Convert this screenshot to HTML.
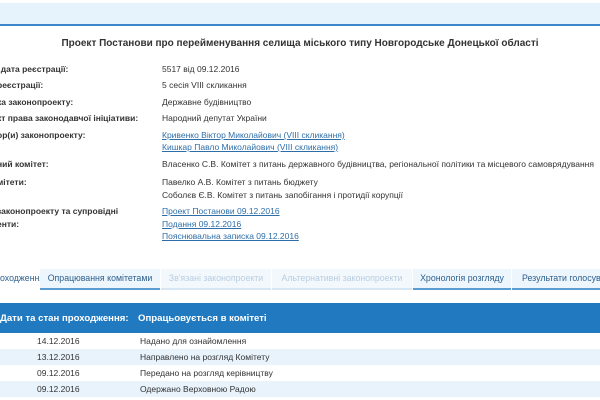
<!DOCTYPE html>
<html><head><meta charset="utf-8"><style>
body{margin:0;width:600px;height:400px;overflow:hidden;background:#fff;font-family:"Liberation Sans",Arial,sans-serif;font-size:8.5px;color:#333;position:relative}
.a{position:absolute;white-space:nowrap}
.top{position:absolute;left:0;top:3px;width:600px;height:21px;background:#e6f2fc;border-bottom:2px solid #3a86c8}
.l{font-weight:bold;color:#333}
a{color:#2e6ea8;text-decoration:underline}
.tab{position:absolute;top:269px;height:19px;line-height:19px;text-align:center;background:#eef6fd;border-bottom:2px solid #5a9bd2;color:#2d5f8e;white-space:nowrap;overflow:hidden;font-size:8.8px}
.tab.d{color:#b8cde0;background:#f3f8fd;border-bottom-color:#d6e6f4}
.hd{position:absolute;left:0;top:303px;width:600px;height:30px;background:#2179c0;color:#fff;font-weight:bold;font-size:9.6px}
.r{position:absolute;left:0;width:600px;height:16px;line-height:16px}
.r.s{background:#e8f3fc}
</style></head><body>
<div class="top"></div>
<div class="a" style="left:0;width:600px;top:38px;text-align:center;font-weight:bold;font-size:10px">Проект Постанови про перейменування селища міського типу Новгородське Донецької області</div>
<div class="a l" style="left:-4px;top:64px">, дата реєстрації:</div><div class="a" style="left:162px;top:64px">5517 від 09.12.2016</div>
<div class="a l" style="left:-3px;top:80px">реєстрації:</div><div class="a" style="left:162px;top:80px">5 сесія VIII скликання</div>
<div class="a l" style="left:-3px;top:97px">ка законопроекту:</div><div class="a" style="left:162px;top:97px">Державне будівництво</div>
<div class="a l" style="left:-3px;top:113px">кт права законодавчої ініціативи:</div><div class="a" style="left:162px;top:113px">Народний депутат України</div>
<div class="a l" style="left:-3px;top:130px">ор(и) законопроекту:</div><div class="a" style="left:162px;top:130px"><a>Кривенко Віктор Миколайович (VIII скликання)</a></div>
<div class="a" style="left:162px;top:142px"><a>Кишкар Павло Миколайович (VIII скликання)</a></div>
<div class="a l" style="left:-3px;top:159px">ний комітет:</div><div class="a" style="left:162px;top:159px">Власенко С.В. Комітет з питань державного будівництва, регіональної політики та місцевого самоврядування</div>
<div class="a l" style="left:-3px;top:177px">мітети:</div><div class="a" style="left:162px;top:177px">Павелко А.В. Комітет з питань бюджету</div>
<div class="a" style="left:162px;top:190px">Соболєв Є.В. Комітет з питань запобігання і протидії корупції</div>
<div class="a l" style="left:-3px;top:206px">законопроекту та супровідні</div><div class="a l" style="left:-3px;top:219px">енти:</div>
<div class="a" style="left:162px;top:206px"><a>Проект Постанови 09.12.2016</a></div>
<div class="a" style="left:162px;top:219px"><a>Подання 09.12.2016</a></div>
<div class="a" style="left:162px;top:231px"><a>Пояснювальна записка 09.12.2016</a></div>
<div class="tab" style="left:0;width:40px;background:#fff;border-bottom:none;color:#2d5f8e;text-align:left">оходження</div>
<div class="tab" style="left:40px;width:120px">Опрацювання комітетами</div>
<div class="tab d" style="left:161px;width:110px">Зв'язані законопроекти</div>
<div class="tab d" style="left:272px;width:140px">Альтернативні законопроекти</div>
<div class="tab" style="left:413px;width:98px">Хронологія розгляду</div>
<div class="tab" style="left:512px;width:100px;text-align:left;padding-left:10px">Результати голосування</div>
<div class="hd"><span class="a" style="left:0;top:10px">Дати та стан проходження:</span><span class="a" style="left:138px;top:10px">Опрацьовується в комітеті</span></div>
<div class="r" style="top:333px"><span class="a" style="left:37px">14.12.2016</span><span class="a" style="left:140px">Надано для ознайомлення</span></div>
<div class="r s" style="top:349px"><span class="a" style="left:37px">13.12.2016</span><span class="a" style="left:140px">Направлено на розгляд Комітету</span></div>
<div class="r" style="top:365px"><span class="a" style="left:37px">09.12.2016</span><span class="a" style="left:140px">Передано на розгляд керівництву</span></div>
<div class="r s" style="top:381px"><span class="a" style="left:37px">09.12.2016</span><span class="a" style="left:140px">Одержано Верховною Радою</span></div>
</body></html>
